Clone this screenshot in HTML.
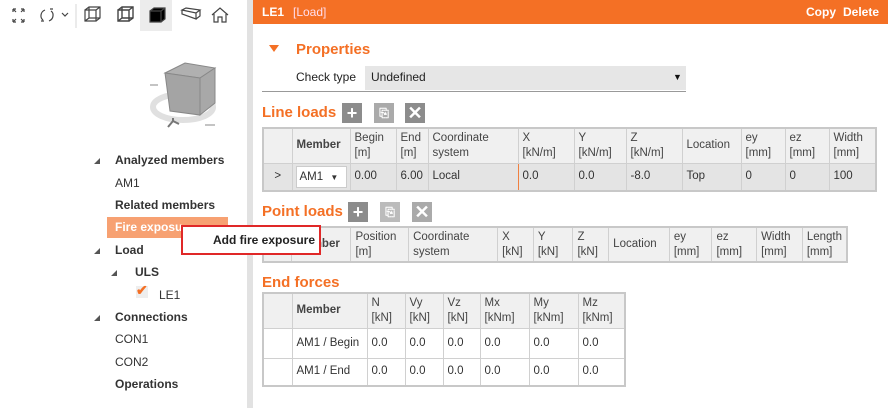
<!DOCTYPE html>
<html><head><meta charset="utf-8"><style>
*{margin:0;padding:0;box-sizing:border-box}
body{width:888px;height:408px;overflow:hidden;background:#fff;font-family:"Liberation Sans",sans-serif;font-size:12px;color:#333;position:relative}
.a{position:absolute;white-space:nowrap}
.b{font-weight:bold}
.o{color:#f47025;font-weight:bold;font-size:15px}
table{position:absolute;border-collapse:collapse;font-size:11.5px;border:2px solid #c8c8c8}
td{border:1px solid #d0d0d0;padding:1px 4px;vertical-align:middle;line-height:15px}
tr.h td{background:#f0f0f0;color:#444}
.btn{position:absolute;width:20px;height:20px;background:#8c8c8c;color:#fff;font-weight:bold;text-align:center;line-height:20px;font-size:18px}
</style></head><body>
<!-- left panel -->
<div class="a" style="left:140px;top:0;width:32px;height:31px;background:#ececec"></div>
<svg class="a" style="left:0;top:0" width="240" height="32" fill="none" stroke="#444" stroke-width="1.2">
<path d="M13 9l3 3M13 9v3M13 9h3M24 9l-3 3M24 9v3M24 9h-3M13 22l3-3M13 22v-3M13 22h3M24 22l-3-3M24 22v-3M24 22h-3"/>
<path d="M45 10c-5 2-5 8-2 10M44 21h-3M49 21c5-2 5-8 2-10M50 9h3M62 13l3 3 3-3"/>
<line x1="76" y1="4" x2="76" y2="28" stroke="#ddd"/>
<path d="M85 10h11v11h-11zM85 10l4-3h11v11l-4 3M96 10l4-3M89 7v11h11M89 18l-4 3"/>
<path d="M118 10h11v11h-11zM118 10l4-3h11v11l-4 3M129 10l4-3M122 7v11h11M122 18l-4 3" stroke-width="1.4"/>
<path d="M150 11h11v11h-11zM150 11l4-3h11v11l-4 3M161 11l4-3" fill="#000"/>
<path d="M182 10l14 3 4-3-14-2zM182 10v4l14 5v-6M196 19l4-3v-6"/>
<path d="M212 15l8-7 8 7M214 14v8h4v-5h4v5h4v-8"/>
</svg>
<svg class="a" style="left:150px;top:55px" width="90" height="80">
<ellipse cx="33" cy="52" rx="30" ry="13" fill="none" stroke="#e0e0e0" stroke-width="6"/>
<path d="M15 18l20-10 30 5-15 10z" fill="#b0b0b0" stroke="#888"/>
<path d="M50 23l15-10v35l-15 12z" fill="#a8a8a8" stroke="#888"/>
<path d="M15 18l35 5v37l-30-4z" fill="#a4a4a4" stroke="#888"/>
<path d="M18 72l5-6 6 3M23 66v-3" stroke="#777" fill="none" stroke-width="2"/>
<path d="M0 30h8M55 70h10" stroke="#888"/>
</svg>
<div class="a" style="left:247px;top:0;width:6px;height:408px;background:#e2e2e2"></div>
<div class="a" style="left:107px;top:217px;width:121px;height:21px;background:#f7a172"></div>
<svg class="a" style="left:0;top:0" width="130" height="400" fill="#555">
<path d="M94 164l6-6v6z M94 254l6-6v6z M111 276l6-6v6z M94 321l6-6v6z"/>
</svg>
<div class="a b" style="left:115px;top:153px">Analyzed members</div>
<div class="a" style="left:115px;top:176px">AM1</div>
<div class="a b" style="left:115px;top:198px">Related members</div>
<div class="a b" style="left:115px;top:220px;color:#fff">Fire exposu</div>
<div class="a b" style="left:115px;top:243px">Load</div>
<div class="a b" style="left:135px;top:265px">ULS</div>
<div class="a" style="left:136px;top:286px;width:12px;height:12px;background:#eee"></div>
<div class="a" style="left:136px;top:282px;color:#f47025;font-size:14px;font-weight:bold">✔</div>
<div class="a" style="left:159px;top:288px">LE1</div>
<div class="a b" style="left:115px;top:310px">Connections</div>
<div class="a" style="left:115px;top:332px">CON1</div>
<div class="a" style="left:115px;top:355px">CON2</div>
<div class="a b" style="left:115px;top:377px">Operations</div>
<!-- header -->
<div class="a" style="left:253px;top:0;width:635px;height:24px;background:#f47025"></div>
<div class="a b" style="left:262px;top:5px;color:#fff">LE1</div>
<div class="a" style="left:293px;top:5px;color:#fde">[Load]</div>
<div class="a b" style="left:806px;top:5px;color:#fff">Copy</div>
<div class="a b" style="left:843px;top:5px;color:#fff">Delete</div>
<!-- properties -->
<div class="a" style="left:269px;top:45px;border-left:5px solid transparent;border-right:5px solid transparent;border-top:7px solid #f47025"></div>
<div class="a o" style="left:296px;top:41px">Properties</div>
<div class="a" style="left:296px;top:70px;color:#222">Check type</div>
<div class="a" style="left:365px;top:66px;width:321px;height:24px;background:#e6e6e6"></div>
<div class="a" style="left:371px;top:70px;color:#222">Undefined</div>
<div class="a" style="left:673px;top:72px;font-size:9px;color:#111">▼</div>
<div class="a" style="left:262px;top:91px;width:424px;height:1px;background:#999"></div>
<!-- line loads -->
<div class="a o" style="left:262px;top:104px">Line loads</div>
<div class="btn" style="left:342px;top:103px">+</div>
<div class="btn" style="left:374px;top:103px;background:#aaa;font-size:12px">⎘</div>
<div class="btn" style="left:405px;top:103px">✕</div>
<table style="left:262px;top:127px;width:615px">
<tr class="h" style="height:35px"><td style="width:29px"></td><td class="b" style="width:58px">Member</td><td style="width:46px">Begin<br>[m]</td><td style="width:32px">End<br>[m]</td><td style="width:90px">Coordinate<br>system</td><td style="width:56px">X<br>[kN/m]</td><td style="width:52px">Y<br>[kN/m]</td><td style="width:56px">Z<br>[kN/m]</td><td style="width:59px">Location</td><td style="width:44px">ey<br>[mm]</td><td style="width:44px">ez<br>[mm]</td><td>Width<br>[mm]</td></tr>
<tr style="height:28px;background:#e4e4e4"><td style="text-align:center">&gt;</td><td style="padding:2px 3px"><div style="background:#fff;border:1px solid #ccc;height:22px;line-height:20px;padding-left:3px">AM1 <span style="font-size:8px;margin-left:4px">▼</span></div></td><td>0.00</td><td>6.00</td><td style="border:1px solid #f08040">Local</td><td>0.0</td><td>0.0</td><td>-8.0</td><td>Top</td><td>0</td><td>0</td><td>100</td></tr>
</table>
<!-- point loads -->
<div class="a o" style="left:262px;top:203px">Point loads</div>
<div class="btn" style="left:348px;top:202px">+</div>
<div class="btn" style="left:380px;top:202px;background:#bbb;font-size:12px">⎘</div>
<div class="btn" style="left:412px;top:202px;background:#aaa">✕</div>
<table style="left:262px;top:226px;width:586px">
<tr class="h" style="height:35px"><td style="width:29px"></td><td class="b" style="width:60px">Member</td><td style="width:58px">Position<br>[m]</td><td style="width:90px">Coordinate<br>system</td><td style="width:36px">X<br>[kN]</td><td style="width:40px">Y<br>[kN]</td><td style="width:36px">Z<br>[kN]</td><td style="width:61px">Location</td><td style="width:43px">ey<br>[mm]</td><td style="width:45px">ez<br>[mm]</td><td style="width:46px">Width<br>[mm]</td><td>Length<br>[mm]</td></tr>
</table>
<!-- end forces -->
<div class="a o" style="left:262px;top:274px">End forces</div>
<table style="left:262px;top:292px;width:364px">
<tr class="h" style="height:35px"><td style="width:29px"></td><td class="b" style="width:75px">Member</td><td style="width:38px">N<br>[kN]</td><td style="width:38px">Vy<br>[kN]</td><td style="width:37px">Vz<br>[kN]</td><td style="width:49px">Mx<br>[kNm]</td><td style="width:49px">My<br>[kNm]</td><td>Mz<br>[kNm]</td></tr>
<tr style="height:30px"><td></td><td>AM1 / Begin</td><td>0.0</td><td>0.0</td><td>0.0</td><td>0.0</td><td>0.0</td><td>0.0</td></tr>
<tr style="height:28px"><td></td><td>AM1 / End</td><td>0.0</td><td>0.0</td><td>0.0</td><td>0.0</td><td>0.0</td><td>0.0</td></tr>
</table>
<!-- context menu -->
<div class="a" style="left:181px;top:225px;width:140px;height:30px;background:#fff;border:2px solid #e02828"></div>
<div class="a b" style="left:213px;top:233px;color:#222">Add fire exposure</div>
</body></html>
